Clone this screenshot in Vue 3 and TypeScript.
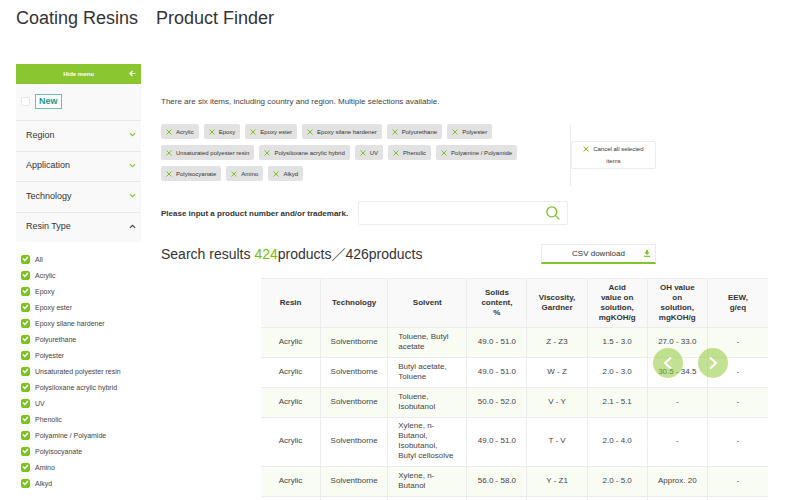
<script setup lang="ts">
import { ref } from 'vue'

interface Row {
  technology: string
  solvent: string
  solids: string
  viscosity: string
  acid: string
  oh: string
  eew: string
}

const resins: string[] = [
  'Acrylic', 'Epoxy', 'Epoxy ester', 'Epoxy silane hardener', 'Polyurethane',
  'Polyester', 'Unsaturated polyester resin', 'Polysiloxane acrylic hybrid',
  'UV', 'Phenolic', 'Polyamine / Polyamide', 'Polyisocyanate', 'Amino', 'Alkyd',
]
const options = ['All', ...resins]
const checked = ref<string[]>([...options])
const onlyNew = ref(false)
const query = ref('')

const groups = [
  { name: 'Region', open: false },
  { name: 'Application', open: false },
  { name: 'Technology', open: false },
  { name: 'Resin Type', open: true },
]

const headings = [
  'Resin', 'Technology', 'Solvent', 'Solids\ncontent,\n%', 'Viscosity,\nGardner',
  'Acid\nvalue on\nsolution,\nmgKOH/g', 'OH value\non\nsolution,\nmgKOH/g', 'EEW,\ng/eq',
]

const rows: Row[] = [
  { technology: 'Solventborne', solvent: 'Toluene, Butyl\nacetate', solids: '49.0 - 51.0', viscosity: 'Z - Z3', acid: '1.5 - 3.0', oh: '27.0 - 33.0', eew: '-' },
  { technology: 'Solventborne', solvent: 'Butyl acetate,\nToluene', solids: '49.0 - 51.0', viscosity: 'W - Z', acid: '2.0 - 3.0', oh: '30.5 - 34.5', eew: '-' },
  { technology: 'Solventborne', solvent: 'Toluene,\nIsobutanol', solids: '50.0 - 52.0', viscosity: 'V - Y', acid: '2.1 - 5.1', oh: '-', eew: '-' },
  { technology: 'Solventborne', solvent: 'Xylene, n-\nButanol,\nIsobutanol,\nButyl cellosolve', solids: '49.0 - 51.0', viscosity: 'T - V', acid: '2.0 - 4.0', oh: '-', eew: '-' },
  { technology: 'Solventborne', solvent: 'Xylene, n-\nButanol', solids: '56.0 - 58.0', viscosity: 'Y - Z1', acid: '2.0 - 5.0', oh: 'Approx. 20', eew: '-' },
]
</script>

<template>
  <div class="page">
    <h1 class="title"><span>Coating Resins</span><span>Product Finder</span></h1>

    <div class="layout">
      <aside class="sidebar">
        <button class="hide-menu" type="button">
          Hide menu
          <svg class="back" viewBox="0 0 8 8" aria-hidden="true"><path d="M7.5 4H1M4 1 1 4l3 3" /></svg>
        </button>
        <label class="new-row">
          <input v-model="onlyNew" class="check" type="checkbox" />
          <span class="new-tag">New</span>
        </label>
        <div class="groups">
          <button v-for="g in groups" :key="g.name" class="group" :class="{ open: g.open }" type="button">
            {{ g.name }}
            <svg viewBox="0 0 8 8" aria-hidden="true"><path d="M1 2.5 4 5.3l3-2.8" /></svg>
          </button>
        </div>
        <div class="options">
          <label v-for="o in options" :key="o" class="option">
            <input v-model="checked" class="check" type="checkbox" :value="o" />
            <span>{{ o }}</span>
          </label>
        </div>
      </aside>

      <main class="main">
        <p class="intro">There are six items, including country and region. Multiple selections available.</p>

        <div class="filters">
          <div class="chips">
            <button v-for="r in resins" :key="r" class="chip" type="button">
              <svg class="cross" viewBox="0 0 6 6" aria-hidden="true"><path d="M.5.5l5 5M5.5.5l-5 5" /></svg>
              {{ r }}
            </button>
          </div>
          <div class="cancel-col">
            <button class="cancel" type="button">
              <svg class="cross" viewBox="0 0 6 6" aria-hidden="true"><path d="M.5.5l5 5M5.5.5l-5 5" /></svg>
              Cancel all selected items
            </button>
          </div>
        </div>

        <form class="search" @submit.prevent>
          <label for="keyword">Please input a product number and/or trademark.</label>
          <div class="search-box">
            <input id="keyword" v-model="query" type="text" />
            <button type="submit" aria-label="Search">
              <svg viewBox="0 0 14 14" aria-hidden="true"><circle cx="5.8" cy="5.8" r="5" /><path d="m9.4 9.4 4 4" /></svg>
            </button>
          </div>
        </form>

        <div class="results">
          <h2>Search results <em>424</em>products／426products</h2>
          <button class="csv" type="button">
            CSV download
            <svg viewBox="0 0 6 7" aria-hidden="true"><path d="M2 0h2v2.2h1.8L3 5 .2 2.2H2zM0 5.8h6V7H0z" /></svg>
          </button>
        </div>

        <div class="table-wrap">
          <table>
            <colgroup>
              <col class="c60" /><col class="c67" /><col class="c79" />
              <col class="c60" /><col class="c60" /><col class="c60" /><col class="c60" /><col class="c60" />
            </colgroup>
            <thead>
              <tr><th v-for="h in headings" :key="h" scope="col">{{ h }}</th></tr>
            </thead>
            <tbody>
              <tr v-for="(r, i) in rows" :key="i">
                <td>Acrylic</td>
                <td>{{ r.technology }}</td>
                <td class="solvent">{{ r.solvent }}</td>
                <td>{{ r.solids }}</td>
                <td>{{ r.viscosity }}</td>
                <td>{{ r.acid }}</td>
                <td>{{ r.oh }}</td>
                <td>{{ r.eew }}</td>
              </tr>
              <tr><td v-for="h in headings" :key="h"></td></tr>
            </tbody>
          </table>
          <div class="arrows">
            <button type="button" aria-label="Previous columns">
              <svg viewBox="0 0 30 30" aria-hidden="true"><path d="m18 9.5-6 5.5 6 5.5" /></svg>
            </button>
            <button type="button" aria-label="Next columns">
              <svg viewBox="0 0 30 30" aria-hidden="true"><path d="m12 9.5 6 5.5-6 5.5" /></svg>
            </button>
          </div>
        </div>
      </main>
    </div>
  </div>
</template>

<style>
body {
  margin: 0;
  background: #fff;
}
</style>

<style scoped>
.page {
  height: 100vh;
  overflow: hidden;
  box-sizing: border-box;
  padding: 8px 32px 0 16px;
  font-family: "Liberation Sans", "Noto Sans CJK JP", sans-serif;
  font-size: 8px;
  color: #333;
}
.page *,
.page *::before {
  box-sizing: border-box;
}
button,
input {
  margin: 0;
  padding: 0;
  border: 0;
  background: none;
  font: inherit;
  color: inherit;
}
button {
  cursor: pointer;
}
svg {
  display: block;
  fill: none;
  stroke: currentColor;
}
.title {
  display: flex;
  gap: 18px;
  margin: 0 0 36px;
  font-size: 18px;
  font-weight: 400;
  line-height: 20px;
}
.layout {
  display: flex;
  align-items: flex-start;
  gap: 20px;
}

/* Sidebar */
.sidebar {
  flex: 0 0 125px;
}
.hide-menu {
  position: relative;
  display: block;
  width: 100%;
  height: 20px;
  background: #8ac62f;
  color: #fff;
  font-size: 6px;
  font-weight: 700;
}
.back {
  position: absolute;
  top: 6px;
  right: 5px;
  width: 7px;
  height: 7px;
  stroke-width: 1.3;
}
.new-row {
  display: flex;
  align-items: center;
  gap: 5px;
  height: 36px;
  padding: 0 5px 2px;
  background: #f9f9f9;
}
.new-tag {
  padding: 0 3px;
  border: 1px solid #6fbfb2;
  background: #fff;
  color: #1c9a86;
  font-size: 9px;
  font-weight: 700;
  line-height: 13px;
}
.groups {
  display: grid;
  grid-template-rows: repeat(4, 1fr);
  height: 122px;
  margin-bottom: 9px;
}
.group {
  display: flex;
  align-items: center;
  justify-content: space-between;
  padding: 0 5px 2px 10px;
  border-top: 1px solid #e8e8e8;
  background: #f9f9f9;
  font-size: 9px;
  text-align: left;
}
.group svg {
  width: 7px;
  height: 7px;
  color: #8ac62f;
  stroke-width: 1.3;
}
.group.open svg {
  color: #444;
  transform: rotate(180deg);
}
.options {
  display: grid;
  grid-auto-rows: 16px;
  padding-left: 5px;
}
.option {
  display: flex;
  align-items: center;
  gap: 5px;
  font-size: 7px;
  color: #444;
}
.check {
  appearance: none;
  flex: none;
  width: 9px;
  height: 9px;
  border: 1px solid #e6e6e6;
  border-radius: 2px;
  background: #fff;
}
.check:checked {
  display: grid;
  place-items: center;
  border-color: #7ac51c;
  background: #7ac51c;
}
.check:checked::before {
  content: "";
  width: 7px;
  height: 7px;
  background: #fff;
  clip-path: polygon(6% 52%, 22% 36%, 40% 54%, 78% 14%, 94% 30%, 40% 84%);
}

/* Main column */
.main {
  flex: 1;
  min-width: 0;
}
.intro {
  margin: 33px 0 17px;
  line-height: 10px;
  color: #444;
}
.filters {
  display: flex;
  margin-right: 112px;
}
.chips {
  flex: 1;
  display: flex;
  flex-wrap: wrap;
  align-content: flex-start;
  gap: 6px 5px;
}
.chip {
  display: flex;
  align-items: center;
  gap: 4px;
  height: 15px;
  padding: 0 5px;
  border-radius: 2px;
  background: #e2e2e2;
  font-size: 6px;
}
.cross {
  width: 6px;
  height: 6px;
  color: #7fc322;
}
.cancel-col {
  display: flex;
  align-items: center;
  height: 62px;
  border-left: 1px solid #ececec;
}
.cancel {
  width: 85px;
  padding: 1px 8px;
  border: 1px solid #ececec;
  border-radius: 2px;
  font-size: 6px;
  line-height: 12px;
}
.cancel .cross {
  display: inline-block;
  margin-right: 2px;
  vertical-align: middle;
}
.search {
  display: flex;
  align-items: center;
  gap: 10px;
  margin: 15px 200px 0 0;
}
.search label {
  font-weight: 700;
}
.search-box {
  flex: 1;
  display: flex;
  align-items: center;
  height: 24px;
  padding-right: 7px;
  border: 1px solid #ececec;
  border-radius: 2px;
}
.search-box input {
  flex: 1;
  min-width: 0;
  height: 100%;
  padding: 0 6px;
  outline: none;
}
.search-box svg {
  width: 14px;
  height: 14px;
  color: #7fc322;
  stroke-width: 1.3;
}
.results {
  display: flex;
  align-items: center;
  justify-content: space-between;
  margin: 19px 112px 14px 0;
}
.results h2 {
  margin: 0;
  font-size: 14px;
  font-weight: 400;
  line-height: 20px;
  white-space: nowrap;
}
.results em {
  font-style: normal;
  color: #76c100;
}
.csv {
  position: relative;
  width: 115px;
  height: 20px;
  border: 1px solid #ececec;
  border-bottom: 2px solid #7ec62a;
}
.csv svg {
  position: absolute;
  top: 5px;
  right: 5px;
  width: 6px;
  height: 7px;
  fill: #7ec62a;
  stroke: none;
}

/* Product table */
.table-wrap {
  position: relative;
  margin-left: 100px;
}
table {
  width: 100%;
  table-layout: fixed;
  border-collapse: separate;
  border-spacing: 0;
  line-height: 10px;
}
.c60 {
  width: 60px;
}
.c67 {
  width: 67px;
}
.c79 {
  width: 79px;
}
th,
td {
  border-bottom: 1px solid #ececec;
  border-right: 1px solid #ececec;
  text-align: center;
  white-space: pre-line;
}
th {
  padding: 4px;
  border-top: 1px solid #ececec;
  background: #f9f9f9;
}
td {
  height: 30px;
  padding: 3px 4px 5px;
  color: #444;
}
th:last-child,
td:last-child {
  border-right: 0;
}
tbody tr:nth-child(odd) {
  background: #f8fcf3;
}
td.solvent {
  padding-left: 10px;
  text-align: left;
}
.arrows {
  position: absolute;
  top: 70px;
  right: 40px;
  display: flex;
  gap: 15px;
}
.arrows button {
  width: 30px;
  height: 30px;
  border-radius: 50%;
  background: rgba(138, 198, 47, 0.52);
  color: #fff;
}
.arrows svg {
  stroke-width: 2;
}
</style>
